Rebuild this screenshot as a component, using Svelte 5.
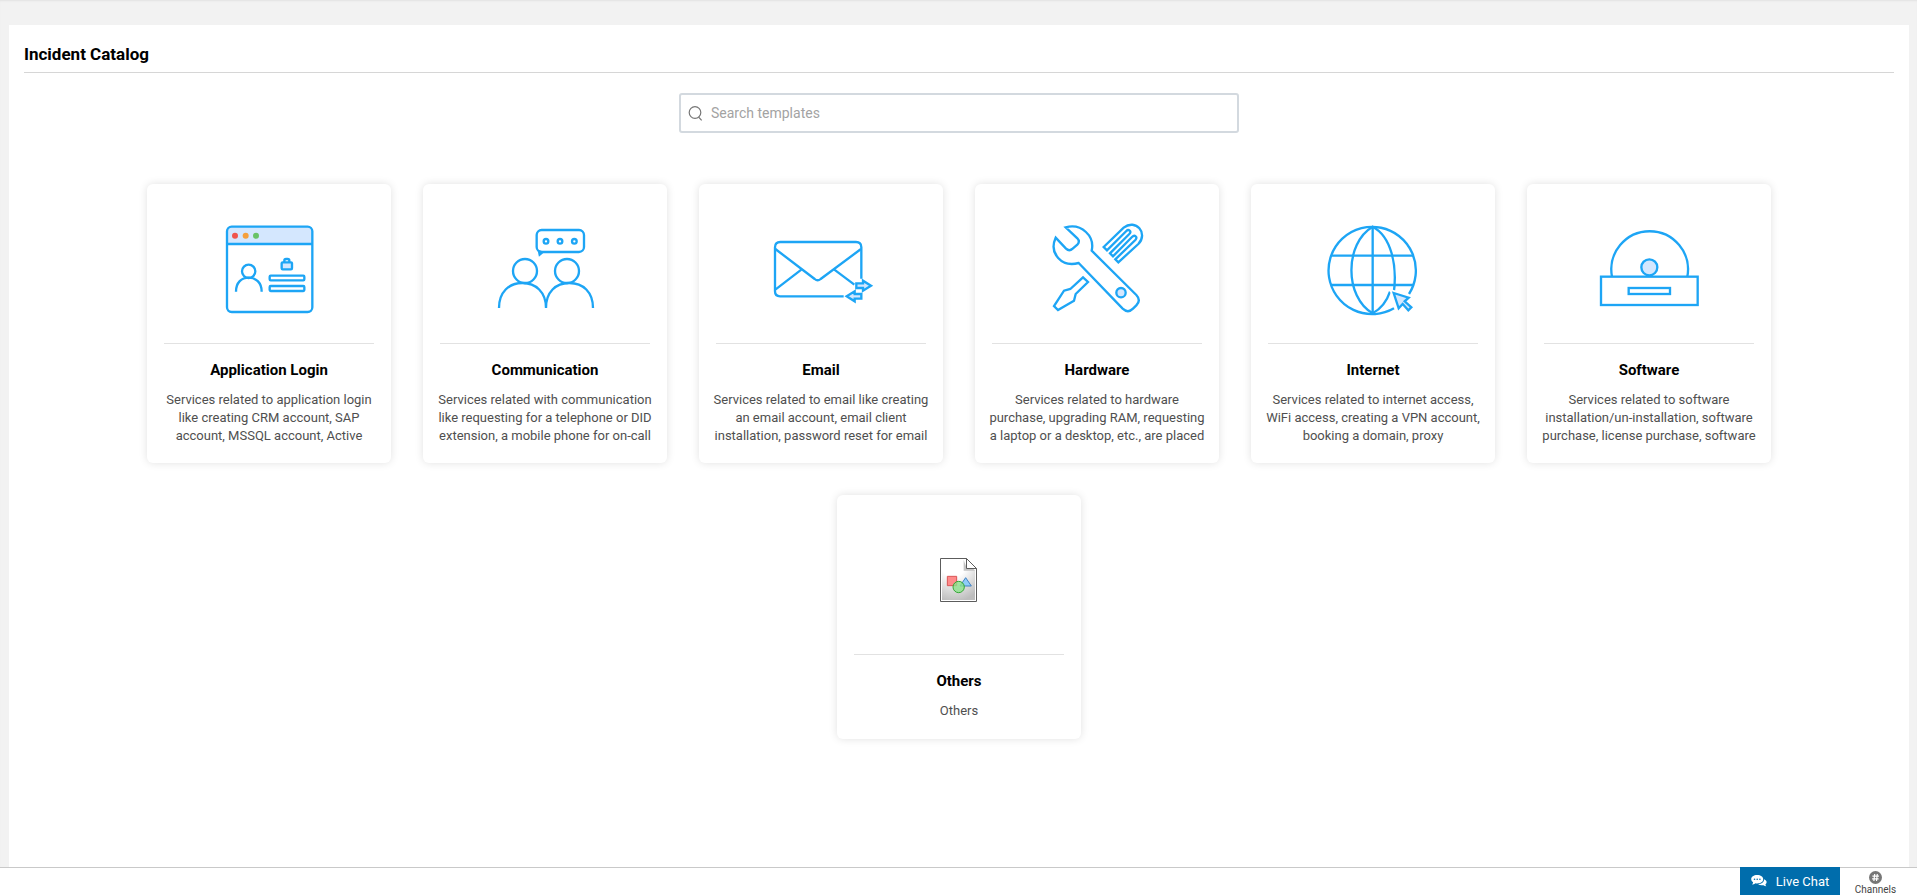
<script>
	let search = "";

	const categories = [
		{
			icon: "login",
			name: "Application Login",
			text: "Services related to application login like creating CRM account, SAP account, MSSQL account, Active",
		},
		{
			icon: "communication",
			name: "Communication",
			text: "Services related with communication like requesting for a telephone or DID extension, a mobile phone for on-call",
		},
		{
			icon: "email",
			name: "Email",
			text: "Services related to email like creating an email account, email client installation, password reset for email",
		},
		{
			icon: "hardware",
			name: "Hardware",
			text: "Services related to hardware purchase, upgrading RAM, requesting a laptop or a desktop, etc., are placed",
		},
		{
			icon: "internet",
			name: "Internet",
			text: "Services related to internet access, WiFi access, creating a VPN account, booking a domain, proxy",
		},
		{
			icon: "software",
			name: "Software",
			text: "Services related to software installation/un-installation, software purchase, license purchase, software",
		},
		{ icon: "others", name: "Others", text: "Others" },
	];
</script>

<div class="page">
	<main class="panel">
		<h1>Incident Catalog</h1>

		<div class="search">
			<svg viewBox="0 0 16 16" aria-hidden="true">
				<circle cx="7" cy="7.5" r="5.8" />
				<path d="M10.5 12l3.200 3.300" />
			</svg>
			<input
				type="text"
				placeholder="Search templates"
				aria-label="Search templates"
				bind:value={search}
			/>
		</div>

		<div class="cards">
			{#each categories as category}
				<a class="card" href="#{category.icon}">
					<div class="picture">
						{#if category.icon === "login"}
							<svg class="line" viewBox="207 102 360 360">
								<path
									class="tint"
									d="M261 207v-37q0-15 15-15h225q15 0 15 15v37z"
								/>
								<rect x="261" y="155" width="256" height="256" rx="14" />
								<path d="M261 207h255" />
								<circle class="dot red" cx="285" cy="182" r="9" />
								<circle class="dot orange" cx="317" cy="182" r="9" />
								<circle class="dot green" cx="348" cy="182" r="9" />
								<circle cx="326" cy="289" r="20" />
								<path d="M288 350c0-28 17-42 38-42s39 14 39 42" />
								<rect x="389" y="302" width="104" height="14" rx="3" />
								<rect x="389" y="333" width="104" height="15" rx="3" />
								<rect
									class="tint-stroke"
									x="425"
									y="262"
									width="31"
									height="21"
									rx="3"
								/>
								<path d="M433 261v-4q0-5 5-5h5q5 0 5 5v4" />
							</svg>
						{:else if category.icon === "communication"}
							<svg class="line" viewBox="210 102 360 360">
								<rect x="365" y="165" width="142" height="66" rx="15" />
								<path d="M372 229l2 10 8-7z" />
								<circle cx="393" cy="199" r="7" />
								<circle cx="435" cy="199" r="7" />
								<circle cx="478" cy="199" r="7" />
								<circle cx="330" cy="288" r="36" />
								<circle cx="456" cy="288" r="36" />
								<path
									d="M252 399c0-48 30-75 70-75s71 27 71 75c0-48 29-75 70-75s71 27 71 75"
								/>
							</svg>
						{:else if category.icon === "email"}
							<svg class="line" viewBox="213 102 360 360">
								<path
									d="M461 364H270q-15 0-15-15V217q0-16 16-16h227q16 0 16 16v94"
								/>
								<path
									d="M256 222l118 90q9 8 18 0l121-90M257 343l77-59M433 284l60 45"
								/>
								<path
									class="tint-stroke"
									d="M499 325h20v-8l24 15-24 15v-8h-20zM514 357h-20v-8l-24 15 24 15v-8h20z"
								/>
							</svg>
						{:else if category.icon === "hardware"}
							<svg class="line" viewBox="216 102 360 360">
								<path
									d="M302 157c48-13 88 27 78 70L514 360q15 16 0 31l-10 10q-15 15-31 0L341 264c-51 14-90-29-69-76l31 33q10 9 20 0l14-12q9-9 0-19z"
								/>
								<circle class="tint-stroke" cx="468" cy="353" r="14" />
								<path
									d="M354 307l15 14-37 36-5 20-48 28-12-12 30-46 19-5z"
								/>
								<path
									d="M416 216l60-58c36-28 75 17 44 49l-60 55-9-9 60-58q6-7 1-11t-11 2l-57 58-9-9 58-58q6-6 1-10t-10 1l-58 58z"
								/>
							</svg>
						{:else if category.icon === "internet"}
							<svg class="line" viewBox="219 102 360 360">
								<path d="M462 400A131 131 0 1 1 507 357" />
								<path d="M398 154v262M273 242h246M273 330h246" />
								<path
									d="M461 356C473 270 453 184 398 155c-85 50-85 211 0 260 24-13 42-35 52-65"
								/>
								<path
									class="knockout"
									d="M461 354l45 14-12 11 20 18-9 9-17-19-12 13z"
								/>
								<path
									class="tint-stroke"
									d="M461 354l45 14-12 11 20 18-9 9-17-19-12 13z"
								/>
							</svg>
						{:else if category.icon === "software"}
							<svg class="line" viewBox="222 102 360 360">
								<path d="M291 305a115 115 0 1 1 226 0" />
								<circle class="tint-stroke" cx="403" cy="277" r="24" />
								<rect x="258" y="305" width="290" height="85" />
								<rect x="341" y="339" width="124" height="18" />
							</svg>
						{:else}
							<svg viewBox="222 105 360 360">
								<defs>
									<radialGradient id="paper" cx="0.35" cy="0" r="1.05">
										<stop offset="0.4" stop-color="#fff" />
										<stop offset="1" stop-color="#bdbdbd" />
									</radialGradient>
								</defs>
								<path
									d="M346.500 220.500h78l30 30v99h-108z"
									fill="#fff"
									stroke="#5c5c5c"
									stroke-width="3"
								/>
								<path d="M351 225h68l31 31v89h-99z" fill="url(#paper)" />
								<path d="M416 225v32h34l-8-9-18-2z" fill="#c4c4c4" />
								<path
									d="M424.500 220.500v30h30z"
									fill="#fff"
									stroke="#5c5c5c"
									stroke-width="3"
								/>
								<path
									d="M367 274h28v28h-28z"
									fill="#ff8a8a"
									stroke="#d95555"
									stroke-width="3"
								/>
								<path
									d="M422 278l17 25h-34z"
									fill="#8fcdf8"
									stroke="#3f80c4"
									stroke-width="3"
								/>
								<circle
									cx="401"
									cy="306"
									r="17"
									fill="#8be28b"
									fill-opacity="0.8"
									stroke="#35a835"
									stroke-width="3"
								/>
							</svg>
						{/if}
					</div>
					<h2>{category.name}</h2>
					<p>{category.text}</p>
				</a>
			{/each}
		</div>
	</main>

	<footer>
		<button class="chat">
			<svg viewBox="0 0 16 12" aria-hidden="true">
				<path
					d="M13 4.2c2 .8 2.800 2 2.600 3.300q-.2 1-1.200 1.900.1 1 1 1.900-1.800 0-2.900-1.100-3.500.6-5.500-1.100C10.500 9.200 13.200 7.200 13 4.200z"
				/>
				<path
					d="M6.200 0c3.500 0 6 1.800 6 4.200s-2.500 4.200-6 4.200q-.9 0-1.700-.2Q3 9.500 1 9.500q1-1 1.100-2.200Q.2 6 .2 4.200C.2 1.800 2.700 0 6.200 0z"
				/>
				<g class="holes">
					<circle cx="3.500" cy="4.200" r=".8" />
					<circle cx="6.200" cy="4.200" r=".8" />
					<circle cx="8.900" cy="4.200" r=".8" />
				</g>
			</svg>
			Live Chat
		</button>
		<button class="channels">
			<svg viewBox="0 0 13 13" aria-hidden="true">
				<circle cx="6.500" cy="6.500" r="6.500" />
				<path d="M5.700 3l-.8 7M8.300 3l-.8 7M3.400 5.200h6.500M3.100 7.800h6.500" />
			</svg>
			Channels
		</button>
	</footer>
</div>

<style>
	:global(body) {
		margin: 0;
		font-family: Roboto, "Liberation Sans", sans-serif;
		background: #f2f2f2;
	}

	.page {
		display: flex;
		flex-direction: column;
		min-height: 100vh;
		box-sizing: border-box;
		box-shadow: inset 0 2px 2px -1px #e2e2e2;
	}

	.panel {
		flex: 1;
		margin: 25px 8px 0 9px;
		padding: 16px 15px 32px;
		background: #fff;
	}

	h1 {
		margin: 0 0 20px;
		padding-bottom: 5px;
		border-bottom: 1px solid #d6d6d6;
		font-size: 17px;
		line-height: 26px;
		font-weight: 700;
		color: #000;
	}

	.search {
		display: flex;
		align-items: center;
		gap: 7px;
		width: 560px;
		max-width: 100%;
		height: 40px;
		margin: 0 auto 51px;
		padding: 0 7px;
		box-sizing: border-box;
		border: 2px solid #d3d9df;
		border-radius: 3px;
	}

	.search svg {
		width: 16px;
		height: 16px;
		fill: none;
		stroke: #777;
		stroke-width: 1.2;
	}

	.search input {
		flex: 1;
		padding: 0;
		border: 0;
		outline: none;
		font: inherit;
		font-size: 14px;
		background: none;
	}

	.search input::placeholder {
		color: #a3a3a3;
	}

	.cards {
		display: flex;
		flex-wrap: wrap;
		justify-content: center;
		align-items: flex-start;
		gap: 32px;
		max-width: 1640px;
		margin: 0 auto;
	}

	.card {
		width: 244px;
		min-height: 244px;
		padding: 0 12px 18px;
		box-sizing: border-box;
		border-radius: 6px;
		box-shadow: 0 0 8px rgba(0, 0, 0, 0.12);
		text-align: center;
		text-decoration: none;
	}

	.picture {
		margin: 0 5px 16px;
		padding: 25px 0 14px;
		border-bottom: 1px solid #e2e2e2;
	}

	.picture svg {
		display: block;
		width: 120px;
		height: 120px;
		margin: 0 auto;
	}

	.line {
		fill: none;
		stroke: #1da5f5;
		stroke-width: 7;
	}

	.tint {
		fill: #d4e7fe;
		stroke: none;
	}

	.tint-stroke {
		fill: #d4e7fe;
	}

	.knockout {
		fill: #fff;
		stroke: #fff;
		stroke-width: 18;
	}

	.dot {
		stroke: none;
	}

	.red {
		fill: #f0544c;
	}

	.orange {
		fill: #f5a03c;
	}

	.green {
		fill: #68c367;
	}

	h2 {
		margin: 0 0 11px;
		font-size: 15px;
		line-height: 20px;
		font-weight: 700;
		color: #000;
	}

	p {
		margin: 0;
		font-size: 13px;
		line-height: 18px;
		color: #4f4f4f;
	}

	footer {
		display: flex;
		justify-content: flex-end;
		gap: 14px;
		height: 28px;
		padding-right: 20px;
		box-sizing: border-box;
		background: linear-gradient(#c9c9c9 1px, #fff 1px);
	}

	button {
		padding: 0;
		border: 0;
		font-family: inherit;
		cursor: pointer;
	}

	.chat {
		display: flex;
		justify-content: center;
		align-items: center;
		gap: 9px;
		width: 100px;
		background: #006dac;
		font-size: 13px;
		color: #fff;
	}

	.chat svg {
		width: 16px;
		height: 12px;
		fill: #fff;
	}

	.holes {
		fill: #006dac;
	}

	.channels {
		display: flex;
		flex-direction: column;
		align-items: center;
		width: 43px;
		padding-top: 4px;
		background: none;
		font-size: 10px;
		line-height: 11px;
		color: #444;
	}

	.channels svg {
		width: 13px;
		height: 13px;
		fill: #777;
	}

	.channels path {
		fill: none;
		stroke: #fff;
		stroke-width: 1.2;
	}
</style>
